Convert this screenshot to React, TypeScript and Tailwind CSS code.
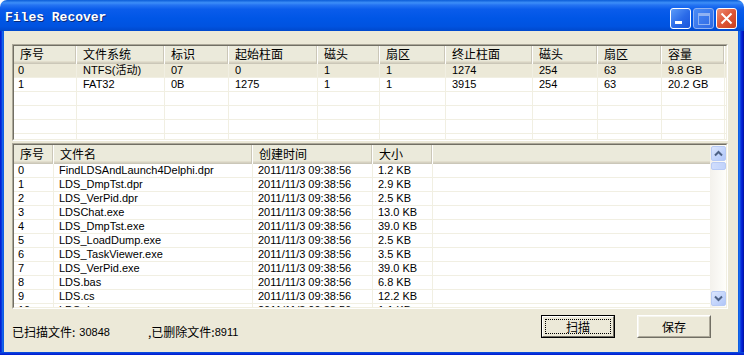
import React from "react";

const topHeaders = ["序号", "文件系统", "标识", "起始柱面", "磁头", "扇区", "终止柱面", "磁头", "扇区", "容量"];
const topW = ["w-[63px]", "w-[88px]", "w-[64px]", "w-[89px]", "w-[62px]", "w-[66px]", "w-[87px]", "w-[65px]", "w-[64px]", "w-[63px]"];
const topRows: string[][] = [
  ["0", "NTFS(活动)", "07", "0", "1", "1", "1274", "254", "63", "9.8 GB"],
  ["1", "FAT32", "0B", "1275", "1", "1", "3915", "254", "63", "20.2 GB"],
  ["", "", "", "", "", "", "", "", "", ""],
  ["", "", "", "", "", "", "", "", "", ""],
  ["", "", "", "", "", "", "", "", "", ""],
  ["", "", "", "", "", "", "", "", "", ""],
];

const botHeaders = ["序号", "文件名", "创建时间", "大小", ""];
const botW = ["w-[40px]", "w-[199px]", "w-[120px]", "w-[60px]", "flex-1"];
const files: string[][] = [
  ["0", "FindLDSAndLaunch4Delphi.dpr", "1.2 KB"],
  ["1", "LDS_DmpTst.dpr", "2.9 KB"],
  ["2", "LDS_VerPid.dpr", "2.5 KB"],
  ["3", "LDSChat.exe", "13.0 KB"],
  ["4", "LDS_DmpTst.exe", "39.0 KB"],
  ["5", "LDS_LoadDump.exe", "2.5 KB"],
  ["6", "LDS_TaskViewer.exe", "3.5 KB"],
  ["7", "LDS_VerPid.exe", "39.0 KB"],
  ["8", "LDS.bas", "6.8 KB"],
  ["9", "LDS.cs", "12.2 KB"],
  ["10", "LDS.dpr", "1.1 KB"],
];

const dataFont = "font-['Liberation_Sans','Noto_Sans_CJK_SC',sans-serif] text-[11px] leading-[13px] text-black";
const cjkFont = "font-['Noto_Sans_CJK_SC','Liberation_Sans',sans-serif]";

function Sunken({ className, children }: { className: string; children: React.ReactNode }) {
  return (
    <div className={`border border-t-[#ACA899] border-l-[#ACA899] border-r-white border-b-white ${className}`}>
      <div className="h-full border border-t-[#716F64] border-l-[#716F64] border-r-[#F1EFE2] border-b-[#F1EFE2] bg-white overflow-hidden">
        {children}
      </div>
    </div>
  );
}

function HeaderCell({ w, label, last, h }: { w: string; label: string; last?: boolean; h: string }) {
  return (
    <div
      className={`${w} shrink-0 ${h} pl-[6px] flex items-center ${cjkFont} text-[12px] leading-[14px] text-black ${
        last ? "" : "shadow-[inset_-1px_0_white,inset_-2px_0_#CBC7B8]"
      }`}
    >
      <span className="-mt-[2px]">{label}</span>
    </div>
  );
}

function Chevron({ up }: { up?: boolean }) {
  return (
    <svg width="9" height="7" viewBox="0 0 9 7">
      <path
        d={up ? "M1 5.5 L4.5 2 L8 5.5" : "M1 1.5 L4.5 5 L8 1.5"}
        stroke="#4D6185"
        strokeWidth="2"
        fill="none"
      />
    </svg>
  );
}

function ScrollButton({ up }: { up?: boolean }) {
  return (
    <div className="h-[15px] w-[15px] mx-auto rounded-[2px] border border-[#B7CAF5] bg-[linear-gradient(to_bottom_right,#DCE6FD,#C1D3FB_60%,#B1C6F8)] flex items-center justify-center">
      <Chevron up={up} />
    </div>
  );
}

function TitleBar() {
  return (
    <div className="h-[31px] shrink-0 flex items-start rounded-t-[7px] bg-[linear-gradient(to_bottom,#0A5CD8_0%,#3D8FF8_9%,#2574F2_16%,#0A5CEB_30%,#0056E6_60%,#0053E0_85%,#0048CC_100%)]">
      <div className="mt-[10px] pl-[5px] font-['Liberation_Mono',monospace] font-bold text-[13px] leading-[16px] text-white [text-shadow:1px_1px_0_#0A2A7A]">
        Files Recover
      </div>
      <div className="ml-auto mr-[7px] mt-[8px] flex gap-[2px] items-center">
        <div className="relative h-[21px] w-[21px] rounded-[3px] border border-white bg-[linear-gradient(to_bottom_right,#5C9BF8,#2A6AE8_55%,#1A55DB)]">
          <div className="absolute left-[4px] top-[12px] h-[3px] w-[7px] bg-white" />
        </div>
        <div className="relative h-[21px] w-[21px] rounded-[3px] border border-[#8FB2F2] bg-[linear-gradient(to_bottom_right,#4C8CF4,#3A78EC_55%,#2E69E4)] flex items-center justify-center">
          <div className="h-[12px] w-[12px] border border-[#8FB2F2] border-t-[3px]" />
        </div>
        <div className="relative h-[21px] w-[21px] rounded-[3px] border border-white bg-[linear-gradient(to_bottom_right,#EE8E72,#DE5638_50%,#C8401F)] flex items-center justify-center">
          <svg width="13" height="13" viewBox="0 0 13 13">
            <path d="M1.5 1.5 L11.5 11.5 M11.5 1.5 L1.5 11.5" stroke="white" strokeWidth="2" />
          </svg>
        </div>
      </div>
    </div>
  );
}

export default function App() {
  return (
    <div className="w-[744px] h-[355px] bg-white overflow-hidden">
      <div className="flex h-full flex-col">
        <TitleBar />
        <div className="flex flex-1 min-h-0">
          <div className="w-[4px] bg-[linear-gradient(to_right,#0019CF,#0831D9,#166AEE,#0855DD)]" />
          <div className="flex-1 flex flex-col bg-[#ECE9D8] pt-[13px] pl-[8px] pr-[10px]">
            {/* top partition table */}
            <Sunken className="h-[97px] w-[716px] shrink-0">
              <div className="flex h-[18px] bg-[#EBEADB] shadow-[inset_0_-1px_#CBC7B8,inset_0_-2px_#D6D2C2,inset_0_-3px_#E2DECD]">
                {topHeaders.map((h, i) => (
                  <HeaderCell key={i} w={topW[i]} label={h} h="h-[18px]" />
                ))}
              </div>
              {topRows.map((r, ri) => (
                <div
                  key={ri}
                  className={`flex h-[14px] border-b border-[#F1EFE2] ${ri === 0 ? "bg-[#ECE9D8]" : ""}`}
                >
                  {r.map((c, ci) => (
                    <div
                      key={ci}
                      className={`${topW[ci]} shrink-0 h-full border-r border-[#F1EFE2] ${ci === 0 ? "pl-[4px]" : "pl-[6px]"} ${dataFont} whitespace-nowrap overflow-hidden`}
                    >
                      {c}
                    </div>
                  ))}
                </div>
              ))}
            </Sunken>
            {/* file list */}
            <Sunken className="mt-[2px] h-[166px] w-[716px] shrink-0">
              <div className="flex h-full">
                <div className="flex-1 min-w-0 overflow-hidden">
                  <div className="flex h-[19px] bg-[#EBEADB] shadow-[inset_0_-1px_#CBC7B8,inset_0_-2px_#D6D2C2,inset_0_-3px_#E2DECD]">
                    {botHeaders.map((h, i) => (
                      <HeaderCell key={i} w={botW[i]} label={h} last={i === 4} h="h-[19px]" />
                    ))}
                  </div>
                  {files.map((f, ri) => {
                    const cells = [f[0], f[1], "2011/11/3 09:38:56", f[2], ""];
                    return (
                      <div key={ri} className="flex h-[14px] border-b border-[#F1EFE2]">
                        {cells.map((c, ci) => (
                          <div
                            key={ci}
                            className={`${botW[ci]} shrink-0 h-full ${ci < 4 ? "border-r border-[#F1EFE2]" : ""} ${ci === 0 ? "pl-[4px]" : "pl-[5px]"} ${dataFont} whitespace-nowrap overflow-hidden`}
                          >
                            {c}
                          </div>
                        ))}
                      </div>
                    );
                  })}
                </div>
                <div className="w-[16px] shrink-0 h-full flex flex-col py-[1px] bg-[linear-gradient(to_right,#F3F1EC,#FEFEFB)]">
                  <ScrollButton up />
                  <div className="mt-[1px] h-[8px] w-[15px] mx-auto rounded-[2px] border border-[#B7CAF5] bg-[linear-gradient(to_right,#D0DDFC,#C1D3FB)]" />
                  <div className="flex-1" />
                  <ScrollButton />
                </div>
              </div>
            </Sunken>
            {/* status & buttons */}
            <div className="flex items-start pt-[6px]">
              <div className="mt-[10px] flex items-center leading-[14px] text-black">
                <div className="w-[136px] flex items-center">
                  <span className={`${cjkFont} text-[12px]`}>已扫描文件:</span>
                  <span className="ml-[4px] font-['Liberation_Sans',sans-serif] text-[11px]">30848</span>
                </div>
                <span className={`${cjkFont} text-[12px]`}>,已删除文件:</span>
                <span className="font-['Liberation_Sans',sans-serif] text-[11px]">8911</span>
              </div>
              <div className="ml-auto mr-[17px] flex gap-[22px]">
                <div className="h-[23px] w-[74px] border border-black bg-[#ECE9D8]">
                  <div className="h-full border border-t-white border-l-white border-r-[#716F64] border-b-[#716F64] p-[2px]">
                    <div className={`h-full border border-dotted border-black flex items-center justify-center ${cjkFont} text-[12px] text-black`}>
                      扫描
                    </div>
                  </div>
                </div>
                <div className="h-[23px] w-[74px] border border-t-white border-l-white border-r-[#716F64] border-b-[#716F64] bg-[#ECE9D8]">
                  <div className={`h-full border border-t-[#F6F5EE] border-l-[#F6F5EE] border-r-[#ACA899] border-b-[#ACA899] flex items-center justify-center ${cjkFont} text-[12px] text-black`}>
                    保存
                  </div>
                </div>
              </div>
            </div>
          </div>
          <div className="w-[6px] bg-[linear-gradient(to_right,#0855DD,#166AEE,#0831D9,#0019CF,#001595)]" />
        </div>
        <div className="h-[3px] shrink-0 bg-[linear-gradient(to_bottom,#0855DD,#0831D9,#0019CF)]" />
      </div>
    </div>
  );
}
